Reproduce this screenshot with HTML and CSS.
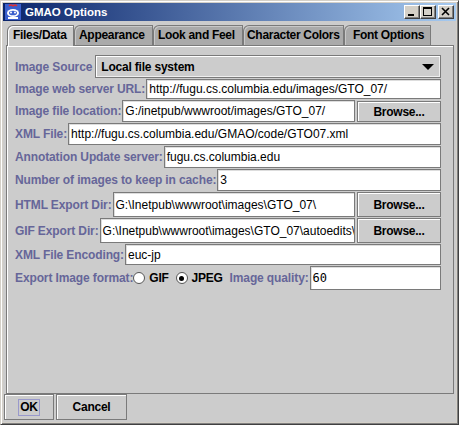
FILE: index.html
```html
<!DOCTYPE html>
<html>
<head>
<meta charset="utf-8">
<link rel="stylesheet" href="styles.css">
</head>
<body>
<div class="window">
  <div class="titlebar">
    <svg class="appicon" width="16" height="16" viewBox="0 0 16 16">
      <rect x="0" y="0" width="16" height="16" fill="#3a5fcd"/>
      <path d="M4 2 Q6 0 8 2 Q10 0 12 2" stroke="#e03030" stroke-width="1.5" fill="none"/>
      <ellipse cx="8" cy="9" rx="6" ry="4" fill="#ffffff"/>
      <ellipse cx="8" cy="9" rx="4" ry="2.3" fill="#3a5fcd"/>
      <rect x="3" y="13" width="10" height="2" fill="#ffffff"/>
      <circle cx="6" cy="8.5" r="1" fill="#ffffff"/>
      <circle cx="10" cy="8.5" r="1" fill="#ffffff"/>
    </svg>
    <span class="title">GMAO Options</span>
    <div class="tbtns">
      <div class="tbtn"><svg width="14" height="12" viewBox="0 0 14 12"><rect x="3" y="8" width="6" height="2" fill="#000"/></svg></div>
      <div class="tbtn"><svg width="14" height="12" viewBox="0 0 14 12"><rect x="2.5" y="1.5" width="8" height="8" fill="none" stroke="#000"/><rect x="2" y="1" width="9" height="2" fill="#000"/></svg></div>
      <div class="tbtn close"><svg width="14" height="12" viewBox="0 0 14 12"><path d="M3 2 L10 9 M10 2 L3 9" stroke="#000" stroke-width="1.6"/></svg></div>
    </div>
  </div>
  <div class="main">
    <div class="tabs">
      <div class="tab sel t1">Files/Data</div>
      <div class="tab t2">Appearance</div>
      <div class="tab t3">Look and Feel</div>
      <div class="tab t4">Character Colors</div>
      <div class="tab t5">Font Options</div>
    </div>
    <div class="panel">
      <div class="row r1">
        <span class="lbl">Image Source</span>
        <div class="combo"><span>Local file system</span><span class="arrow"></span></div>
      </div>
      <div class="row r2">
        <span class="lbl">Image web server URL:</span>
        <div class="field">http://fugu.cs.columbia.edu/images/GTO_07/</div>
      </div>
      <div class="row r3">
        <span class="lbl">Image file location:</span>
        <div class="field">G:/inetpub/wwwroot/images/GTO_07/</div>
        <div class="btn browse">Browse...</div>
      </div>
      <div class="row r4">
        <span class="lbl">XML File:</span>
        <div class="field">http://fugu.cs.columbia.edu/GMAO/code/GTO07.xml</div>
      </div>
      <div class="row r5">
        <span class="lbl">Annotation Update server:</span>
        <div class="field">fugu.cs.columbia.edu</div>
      </div>
      <div class="row r6">
        <span class="lbl">Number of images to keep in cache:</span>
        <div class="field">3</div>
      </div>
      <div class="row r7">
        <span class="lbl">HTML Export Dir:</span>
        <div class="field">G:\Inetpub\wwwroot\images\GTO_07\</div>
        <div class="btn browse">Browse...</div>
      </div>
      <div class="row r8">
        <span class="lbl">GIF Export Dir:</span>
        <div class="field">G:\Inetpub\wwwroot\images\GTO_07\autoedits\</div>
        <div class="btn browse">Browse...</div>
      </div>
      <div class="row r9">
        <span class="lbl">XML File Encoding:</span>
        <div class="field">euc-jp</div>
      </div>
      <div class="row r10">
        <span class="lbl">Export Image format:</span>
        <span class="radio"></span><span class="rlbl">GIF</span>
        <span class="radio on"></span><span class="rlbl">JPEG</span>
        <span class="lbl ql">Image quality:</span>
        <div class="field mono">60</div>
      </div>
    </div>
    <div class="footer">
      <div class="btn ok"><span class="focus">OK</span></div>
      <div class="btn cancel">Cancel</div>
    </div>
  </div>
</div>
</body>
</html>
```

FILE: styles.css
```css
html, body {
  margin: 0;
  padding: 0;
  background: #d4d0c8;
}
body {
  width: 459px;
  height: 425px;
  overflow: hidden;
  font-family: "Liberation Sans", Arial, sans-serif;
  font-size: 12px;
}
.window {
  width: 459px;
  height: 425px;
  box-sizing: border-box;
  border: 1px solid;
  border-color: #d4d0c8 #404040 #404040 #d4d0c8;
  box-shadow: inset 1px 1px #ffffff, inset -1px -1px #808080;
  padding: 2px;
  background: #d4d0c8;
  display: flex;
  flex-direction: column;
}
.titlebar {
  height: 18px;
  flex: none;
  background: linear-gradient(to right, #0a246a, #a6caf0);
  display: flex;
  align-items: center;
  padding-left: 2px;
}
.appicon {
  flex: none;
}
.title {
  color: #ffffff;
  font-weight: bold;
  font-size: 11.5px;
  margin-left: 4px;
}
.tbtns {
  margin-left: auto;
  display: flex;
  margin-right: 2px;
}
.tbtn {
  width: 16px;
  height: 14px;
  box-sizing: border-box;
  background: #d4d0c8;
  border: 1px solid;
  border-color: #ffffff #404040 #404040 #ffffff;
  box-shadow: inset -1px -1px #808080;
  display: flex;
  align-items: center;
  justify-content: center;
}
.tbtn.close {
  margin-left: 2px;
}
.main {
  flex: 1;
  background: #cccccc;
  display: flex;
  flex-direction: column;
  padding: 4px 2px 2px 3px;
}
.tabs {
  display: flex;
  height: 20px;
  padding-left: 1px;
  position: relative;
  z-index: 2;
}
.tab {
  box-sizing: border-box;
  height: 20px;
  background: #aaaaaa;
  border: 1px solid #7a7a7a;
  border-bottom: none;
  border-top-left-radius: 6px;
  box-shadow: inset 1px 1px #c8c8c8;
  font-weight: bold;
  letter-spacing: -0.3px;
  color: #000;
  line-height: 19px;
  white-space: nowrap;
  overflow: hidden;
}
.tab.sel {
  background: #cccccc;
  height: 21px;
  box-shadow: inset 1px 1px #ffffff;
}
.t1 { width: 67px; padding-left: 5px; }
.t2 { width: 79px; padding-left: 4px; }
.t3 { width: 90px; padding-left: 4px; }
.t4 { width: 101px; padding-left: 3px; }
.t5 { width: 87px; padding-left: 8px; }
.panel {
  height: 349px;
  box-sizing: border-box;
  border: 1px solid #7a7a7a;
  box-shadow: inset 1px 1px #ffffff;
  padding: 9px 12px 0 8px;
  display: flex;
  flex-direction: column;
  gap: 1px;
}
.row {
  display: flex;
  align-items: stretch;
  gap: 2px;
}
.r1 { height: 23px; }
.r2 { height: 20px; }
.r3 { height: 22px; }
.r4 { height: 22px; }
.r5 { height: 22px; }
.r6 { height: 22px; }
.r7 { height: 25px; }
.r8 { height: 25px; }
.r9 { height: 21px; }
.r10 { height: 24px; align-items: center; gap: 0; }
.lbl {
  color: #666699;
  font-weight: bold;
  letter-spacing: -0.12px;
  white-space: nowrap;
  align-self: center;
  margin-right: -1px;
}
.field {
  flex: 1;
  box-sizing: border-box;
  background: #ffffff;
  border: 1px solid #7a7a7a;
  box-shadow: inset 1px 1px #dddddd;
  padding-left: 2px;
  display: flex;
  align-items: center;
  white-space: nowrap;
  overflow: hidden;
  color: #000;
  min-width: 0;
}
.r10 .field {
  align-self: stretch;
  margin-left: 2px;
}
.mono {
  font-family: "DejaVu Sans Mono", "Liberation Mono", monospace;
  font-size: 12px;
}
.combo {
  flex: 1;
  box-sizing: border-box;
  background: #cccccc;
  border: 1px solid #7a7a7a;
  box-shadow: inset 1px 1px #ffffff, inset -1px -1px #eeeeee;
  display: flex;
  align-items: center;
  padding-left: 5px;
  font-weight: bold;
  letter-spacing: -0.2px;
  margin-left: 2px;
}
.arrow {
  margin-left: auto;
  margin-right: 6px;
  width: 0;
  height: 0;
  border-left: 6px solid transparent;
  border-right: 6px solid transparent;
  border-top: 6px solid #000;
}
.btn {
  box-sizing: border-box;
  background: #cccccc;
  border: 1px solid #7a7a7a;
  box-shadow: inset 1px 1px #ffffff;
  font-weight: bold;
  letter-spacing: -0.25px;
  display: flex;
  align-items: center;
  justify-content: center;
  color: #000;
}
.browse {
  width: 84px;
  flex: none;
}
.r3 .browse { margin-top: 1px; }
.radio {
  width: 12px;
  height: 12px;
  box-sizing: border-box;
  border: 1px solid #555;
  border-radius: 50%;
  background: #ffffff;
  margin-left: 1px;
  position: relative;
}
.radio.on::after {
  content: "";
  position: absolute;
  left: 2.5px;
  top: 2.5px;
  width: 5px;
  height: 5px;
  border-radius: 50%;
  background: #000;
}
.rlbl {
  font-weight: bold;
  letter-spacing: -0.25px;
  margin-left: 4px;
  margin-right: 6px;
}
.ql {
  margin-left: 1px;
}
.footer {
  display: flex;
  gap: 2px;
  padding-top: 0;
  margin-left: -2px;
}
.ok {
  width: 50px;
  height: 26px;
}
.cancel {
  width: 71px;
  height: 26px;
}
.focus {
  outline: 1px solid #9999cc;
  padding: 1px 1px;
  line-height: 13px;
}
```
